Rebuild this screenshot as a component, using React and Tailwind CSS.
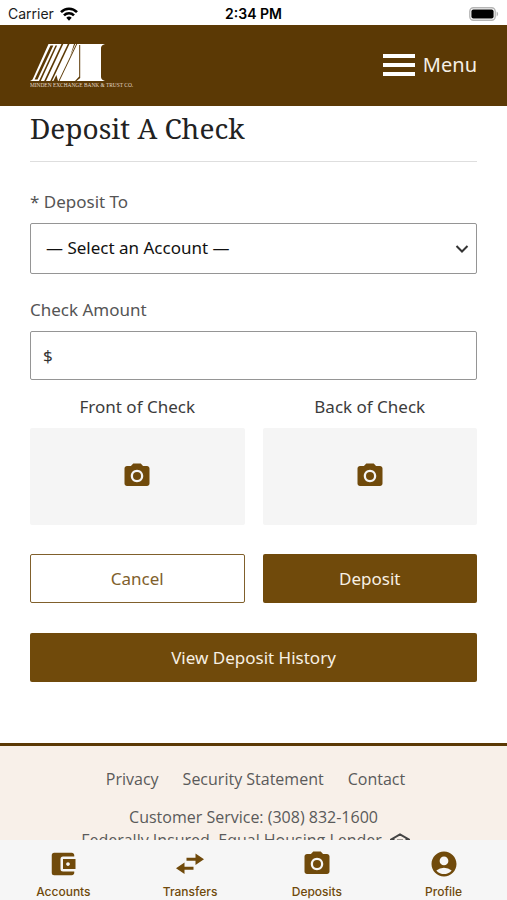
import { MdAccountBalanceWallet, MdAccountCircle, MdPhotoCamera } from 'react-icons/md'

const NAV = [
  { label: 'Accounts', icon: MdAccountBalanceWallet },
  { label: 'Transfers', icon: TransferIcon },
  { label: 'Deposits', icon: MdPhotoCamera },
  { label: 'Profile', icon: MdAccountCircle },
]

const SIDES = ['Front of Check', 'Back of Check']

const LINKS = ['Privacy', 'Security Statement', 'Contact']

function TransferIcon({ className }) {
  return (
    <svg viewBox="0 0 30 30" className={className} fill="currentColor">
      <path d="M11.500 8.700h9V4.500L29 10.200l-8.500 5.700v-4.200h-9z" />
      <path d="M18.500 17.800h-9v-4.200L1 19.300 9.500 25v-4.200h9z" />
    </svg>
  )
}

function StatusBar() {
  return (
    <div className="grid h-[25px] shrink-0 grid-cols-3 items-center bg-white px-2 pt-0.5 font-['Inter',sans-serif] text-sm text-[#1c1c1c]">
      <div className="flex items-center gap-1.5">
        <span>Carrier</span>
        <svg viewBox="0 0 18 14" className="h-3.5 w-[18px]" fill="none" stroke="#000" strokeWidth="2.6">
          <path d="M1 5.2C5.4.6 12.6.6 17 5.2" />
          <path d="M4 8.4c2.8-2.8 7.2-2.8 10 0" />
          <path d="M6.3 10.8c1.5-1.6 3.9-1.6 5.4 0L9 13.8z" fill="#000" stroke="none" />
        </svg>
      </div>
      <span className="text-center font-semibold text-black">2:34 PM</span>
      <svg viewBox="0 0 30 14" className="h-3.5 w-[30px] justify-self-end">
        <rect x="0.8" y="0.8" width="25.4" height="12.4" rx="3.6" fill="#fff" stroke="#b5b5b5" strokeWidth="1.4" />
        <rect x="2.4" y="2.4" width="22.2" height="9.2" rx="2" fill="#000" />
        <path d="M27.6 4.6c2 .8 2 4 0 4.8z" fill="#b5b5b5" />
      </svg>
    </div>
  )
}

function Logo() {
  return (
    <svg viewBox="0 0 106 46" className="h-[46px] w-[106px]" role="img" aria-label="Minden Exchange Bank & Trust Co.">
      <path d="M18.500 2H75c-2.500.8-4 2-4 4v29c0 2 1.500 3.200 4 4H0c1.500-.4 2.400-1.200 3-2.500z" fill="#fff" />
      <g fill="#5b3905">
        <path d="M20.500 3.500h2.800L7.500 37.500H4.600z" />
        <path d="M25.500 3.500h1.600L10.800 39H9z" />
        <path d="M31.500 2h1.800L16 39h-1.800z" />
        <path d="M37.800 2h1.700L22 39h-1.700z" />
        <path d="M44 2h1.200l-5 12zM28 39l-1.600-6-3 6z" />
        <path d="M46.200 2h1L29.500 39h-1z" />
        <path d="M49.200 3h1v33l-3.700 3-1.700.2 4.400-4.700z" />
      </g>
      <text x="0" y="44.500" fontSize="5.4" fill="#e3d8c8" fontFamily="Liberation Serif, serif">
        MINDEN EXCHANGE BANK &amp; TRUST CO.
      </text>
    </svg>
  )
}

function Header() {
  return (
    <header className="flex h-[81px] shrink-0 items-center justify-between bg-[#5b3905] px-[30px] pb-0.5">
      <Logo />
      <button type="button" className="flex items-center gap-2 text-xl text-[#f5efe6]">
        <svg viewBox="0 0 32 24" className="h-6 w-8" fill="#fff">
          <path d="M0 1h32v4H0zM0 10h32v4H0zM0 19h32v4H0z" />
        </svg>
        Menu
      </button>
    </header>
  )
}

function DepositForm() {
  return (
    <form className="px-[30px] pb-[61px]">
      <h1 className="border-b border-[#dedede] pt-0.5 pb-[13px] font-['Noto_Serif','DejaVu_Serif_Condensed',serif] text-[28px] leading-10 text-[#222]">
        Deposit A Check
      </h1>

      <label htmlFor="account" className="mt-7 block pb-[9px] text-[17px] leading-6 text-[#555]">
        * Deposit To
      </label>
      <div className="relative">
        <select
          id="account"
          className="h-[51px] w-full appearance-none rounded-xs border border-[#959595] bg-white px-[15px] pb-0.5 text-[17px] text-[#111]"
        >
          <option>— Select an Account —</option>
        </select>
        <svg viewBox="0 0 14 10" className="pointer-events-none absolute top-[21px] right-2 h-2.5 w-3.5" fill="none" stroke="#333" strokeWidth="2">
          <path d="m1.500 2 5.500 5.500L12.500 2" />
        </svg>
      </div>

      <label htmlFor="amount" className="mt-6 block pb-[9px] text-[17px] leading-6 text-[#555]">
        Check Amount
      </label>
      <div className="flex h-[49px] items-center rounded-xs border border-[#959595] px-3 text-[17px] text-[#333]">
        <span>$</span>
        <input id="amount" type="text" inputMode="decimal" className="ml-2 min-w-0 flex-1 outline-none" />
      </div>

      <div className="mt-[15px] grid grid-cols-2 gap-x-[18px]">
        {SIDES.map((side) => (
          <div key={side} className="text-center text-[17px] leading-6 text-[#3c3c3c]">
            <p className="pb-[9px]">{side}</p>
            <button type="button" aria-label={side} className="flex h-[97px] w-full items-center justify-center rounded-xs bg-[#f5f5f5] pb-0.5 text-[#704a0b]">
              <MdPhotoCamera className="size-[30px]" />
            </button>
          </div>
        ))}
      </div>

      <div className="mt-[29px] grid grid-cols-2 gap-x-[18px] gap-y-[30px] text-[17px]">
        <button type="button" className="h-[49px] rounded-xs border border-[#80602c] bg-white text-[#80602c]">
          Cancel
        </button>
        <button type="submit" className="h-[49px] rounded-xs bg-[#704a0b] text-[#f7f0e4]">
          Deposit
        </button>
        <button type="button" className="col-span-2 h-[49px] rounded-xs bg-[#704a0b] text-[#f7f0e4]">
          View Deposit History
        </button>
      </div>
    </form>
  )
}

function Footer() {
  return (
    <footer className="border-t-[3px] border-[#5b3905] bg-[#f8f0e9] pt-[22px] pb-8 text-center font-['Open_Sans',sans-serif] text-base leading-[23px] text-[#5a5a5a]">
      <nav className="flex justify-center gap-6 pl-1">
        {LINKS.map((link) => (
          <a key={link} href="#">{link}</a>
        ))}
      </nav>
      <p className="mt-[15px]">Customer Service: (308) 832-1600</p>
      <p className="flex items-center justify-center gap-2 pr-4">
        <span>Federally Insured. Equal Housing Lender</span>
        <svg viewBox="0 0 20 16" className="h-4 w-5" fill="none" stroke="#444" strokeWidth="2">
          <path d="M1 6.500 10 1.500l9 5H16.500V15h-13V6.500zM7 7.500h6M7 11h6" />
        </svg>
      </p>
    </footer>
  )
}

function TabBar() {
  return (
    <nav className="grid h-[60px] shrink-0 grid-cols-4 bg-[#f6f6f6] font-['Inter',sans-serif] text-[#704a0b]">
      {NAV.map(({ label, icon: Icon }) => (
        <a key={label} href="#" className="flex flex-col items-center pt-1">
          <span className="flex h-10 items-center">
            <Icon className="size-[30px]" />
          </span>
          <span className="text-xs font-medium">{label}</span>
        </a>
      ))}
    </nav>
  )
}

export default function App() {
  return (
    <div className="flex h-screen flex-col bg-white font-['Noto_Sans',sans-serif]">
      <StatusBar />
      <Header />
      <main className="min-h-0 flex-1 overflow-y-auto [scrollbar-width:none]">
        <DepositForm />
        <Footer />
      </main>
      <TabBar />
    </div>
  )
}
